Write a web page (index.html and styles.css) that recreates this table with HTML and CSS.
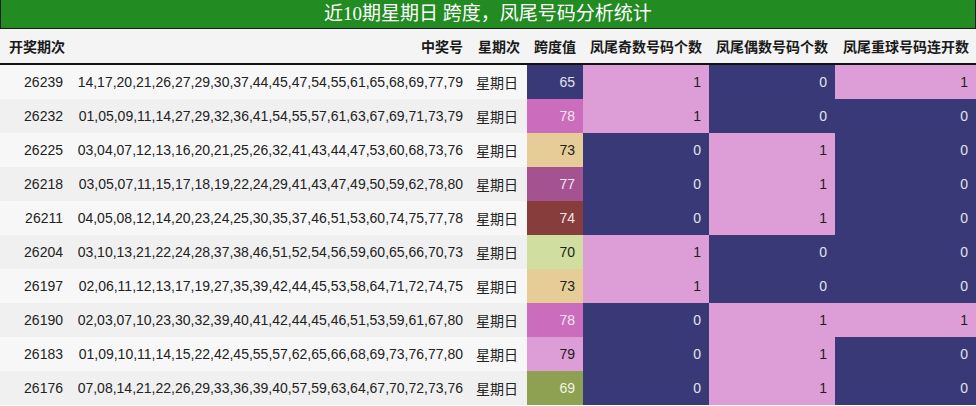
FILE: index.html
```html
<!DOCTYPE html>
<html lang="zh">
<head>
<meta charset="utf-8">
<title>凤尾号码分析统计</title>
<link rel="stylesheet" href="styles.css">
</head>
<body>
<div class="title">近10期星期日 跨度，凤尾号码分析统计</div>
<table class="stats">
  <colgroup>
    <col class="c-issue"><col class="c-nums"><col class="c-week"><col class="c-span"><col class="c-odd"><col class="c-even"><col class="c-rep">
  </colgroup>
  <thead>
    <tr><th>开奖期次</th><th>中奖号</th><th>星期次</th><th>跨度值</th><th>凤尾奇数号码个数</th><th>凤尾偶数号码个数</th><th>凤尾重球号码连开数</th></tr>
  </thead>
  <tbody>
    <tr><td>26239</td><td class="nums">14,17,20,21,26,27,29,30,37,44,45,47,54,55,61,65,68,69,77,79</td><td class="cjk">星期日</td><td class="dk">65</td><td class="pl">1</td><td class="dk">0</td><td class="pl">1</td></tr>
    <tr><td>26232</td><td class="nums">01,05,09,11,14,27,29,32,36,41,54,55,57,61,63,67,69,71,73,79</td><td class="cjk">星期日</td><td class="orc">78</td><td class="pl">1</td><td class="dk">0</td><td class="dk">0</td></tr>
    <tr><td>26225</td><td class="nums">03,04,07,12,13,16,20,21,25,26,32,41,43,44,47,53,60,68,73,76</td><td class="cjk">星期日</td><td class="tan">73</td><td class="dk">0</td><td class="pl">1</td><td class="dk">0</td></tr>
    <tr><td>26218</td><td class="nums">03,05,07,11,15,17,18,19,22,24,29,41,43,47,49,50,59,62,78,80</td><td class="cjk">星期日</td><td class="pur">77</td><td class="dk">0</td><td class="pl">1</td><td class="dk">0</td></tr>
    <tr><td>26211</td><td class="nums">04,05,08,12,14,20,23,24,25,30,35,37,46,51,53,60,74,75,77,78</td><td class="cjk">星期日</td><td class="brn">74</td><td class="dk">0</td><td class="pl">1</td><td class="dk">0</td></tr>
    <tr><td>26204</td><td class="nums">03,10,13,21,22,24,28,37,38,46,51,52,54,56,59,60,65,66,70,73</td><td class="cjk">星期日</td><td class="lgr">70</td><td class="pl">1</td><td class="dk">0</td><td class="dk">0</td></tr>
    <tr><td>26197</td><td class="nums">02,06,11,12,13,17,19,27,35,39,42,44,45,53,58,64,71,72,74,75</td><td class="cjk">星期日</td><td class="tan">73</td><td class="pl">1</td><td class="dk">0</td><td class="dk">0</td></tr>
    <tr><td>26190</td><td class="nums">02,03,07,10,23,30,32,39,40,41,42,44,45,46,51,53,59,61,67,80</td><td class="cjk">星期日</td><td class="orc">78</td><td class="dk">0</td><td class="pl">1</td><td class="pl">1</td></tr>
    <tr><td>26183</td><td class="nums">01,09,10,11,14,15,22,42,45,55,57,62,65,66,68,69,73,76,77,80</td><td class="cjk">星期日</td><td class="pl">79</td><td class="dk">0</td><td class="pl">1</td><td class="dk">0</td></tr>
    <tr><td>26176</td><td class="nums">07,08,14,21,22,26,29,33,36,39,40,57,59,63,64,67,70,72,73,76</td><td class="cjk">星期日</td><td class="olv">69</td><td class="dk">0</td><td class="pl">1</td><td class="dk">0</td></tr>
  </tbody>
</table>
</body>
</html>
```
FILE: styles.css
```css
html, body {
  margin: 0;
  padding: 0;
  background: #ffffff;
}
body {
  width: 976px;
  font-family: "Liberation Sans", "Noto Sans CJK SC", sans-serif;
  font-size: 14px;
  color: #222;
}
.title {
  box-sizing: border-box;
  height: 29px;
  background: #228b22;
  border: 1px solid #1a1a1a;
  border-top: none;
  color: #ffffff;
  font-family: "Liberation Serif", "Noto Sans CJK SC", serif;
  font-size: 19px;
  line-height: 27px;
  text-align: center;
}
.stats {
  width: 976px;
  border-collapse: collapse;
  table-layout: fixed;
}
.c-issue { width: 70px; }
.c-nums { width: 400px; }
.c-week { width: 57px; }
.c-span { width: 56px; }
.c-odd { width: 126px; }
.c-even { width: 126px; }
.c-rep { width: 141px; }
.stats th {
  height: 34px;
  padding: 0 7px;
  background: #f4f4f4;
  border-bottom: 2px solid #111;
  font-family: "Noto Sans CJK SC", sans-serif;
  font-weight: bold;
  font-size: 14px;
  color: #1a1a1a;
  text-align: right;
  white-space: nowrap;
}
.stats th:first-child {
  text-align: left;
  padding-left: 9px;
}
.stats td {
  height: 34px;
  padding: 0 8px 0 6px;
  text-align: right;
  white-space: nowrap;
  color: #222;
}
.stats td:first-child { padding-right: 7px; }
.stats td.nums { padding-right: 7px; }
.stats tbody tr:nth-child(odd) { background: #f7f7f7; }
.stats tbody tr:nth-child(even) { background: #f0f0f0; }
.stats td.cjk {
  font-family: "Noto Sans CJK SC", sans-serif;
  padding-right: 9px;
}
.dk { background: #393978; color: #e2e2ea !important; }
.pl { background: #dd9dd6; color: #1e1e1e !important; }
.orc { background: #cc6cbd; color: #f3e6f0 !important; }
.tan { background: #e6cc96; color: #1e1e1e !important; }
.pur { background: #a45290; color: #f3e6f0 !important; }
.brn { background: #863d3b; color: #f3e6e6 !important; }
.lgr { background: #d0de9f; color: #1e1e1e !important; }
.olv { background: #8ea152; color: #f3f3e6 !important; }
```
